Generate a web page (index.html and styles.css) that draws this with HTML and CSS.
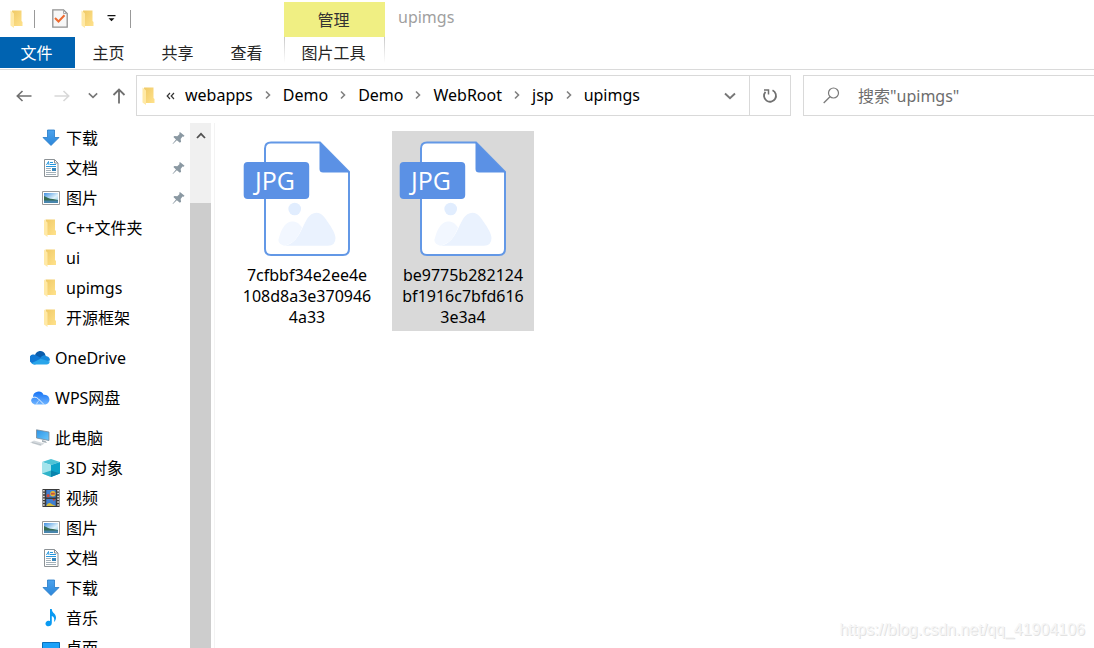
FILE: index.html
```html
<!DOCTYPE html>
<html lang="zh-CN">
<head>
<meta charset="utf-8">
<title>upimgs</title>
<link rel="stylesheet" href="styles.css">
</head>
<body>
<svg class="defs" aria-hidden="true">
  <defs>
    <linearGradient id="gFolder" x1="0" y1="0" x2="1" y2="1"><stop offset="0" stop-color="#efc966"/><stop offset="1" stop-color="#ffe28c"/></linearGradient>
    <linearGradient id="gArrow" x1="0" y1="0" x2="0" y2="1"><stop offset="0" stop-color="#4ba3ee"/><stop offset="1" stop-color="#2b86d9"/></linearGradient>
    <linearGradient id="gSky" x1="0" y1="0" x2="1" y2="1"><stop offset="0" stop-color="#3f8fe0"/><stop offset=".6" stop-color="#e2f3fb"/><stop offset="1" stop-color="#7fc3e8"/></linearGradient>
    <linearGradient id="gScreen" x1="0" y1="0" x2="1" y2="1"><stop offset="0" stop-color="#2c93e6"/><stop offset="1" stop-color="#6cc8fb"/></linearGradient>
    <linearGradient id="gWps" x1="0" y1="0" x2="0" y2="1"><stop offset="0" stop-color="#1673f5"/><stop offset="1" stop-color="#6fb4ff"/></linearGradient>
    <symbol id="folder" viewBox="0 0 13 18">
      <path d="M2 .5H11.500V11L12.500 12V16H3z" fill="url(#gFolder)"/>
      <path d="M.5 .5L4 3.500V18L.5 15.500z" fill="#ffe9a6"/>
    </symbol>
    <symbol id="download" viewBox="0 0 18 18">
      <path d="M5.500 1H12.500V8.500H17L9 16.500L1 8.500H5.500z" fill="url(#gArrow)" stroke="#2579c7" stroke-width=".8"/>
    </symbol>
    <symbol id="doc" viewBox="0 0 18 18">
      <path d="M2.500 .5H12.500L16 4V17.500H2.500z" fill="#fff" stroke="#8c9296"/>
      <path d="M12.500 .5V4H16" fill="none" stroke="#8c9296"/>
      <path d="M4.500 6L6.500 2.500L7 6M8 3.500H11M8 5.500H14M4 7.500H14" fill="none" stroke="#2596dc"/>
      <path d="M4 9.500H9M4 11.500H9M4 13.500H14M4 15.500H14" stroke="#a3b0b8"/>
      <path d="M10 9H14V12H10z" fill="#3b86b8"/>
    </symbol>
    <symbol id="picture" viewBox="0 0 18 18">
      <path d="M.5 2.500H17.500V15.500H.5z" fill="#fff" stroke="#9a9a9a"/>
      <path d="M2 4H16V14H2z" fill="url(#gSky)"/>
      <path d="M2 7C5 8 7 10 11 10L16 11V12H2z" fill="#366b52"/>
      <path d="M2 11.500H16V14H2z" fill="#4886ad"/>
    </symbol>
    <symbol id="pin" viewBox="0 0 14 14">
      <path d="M8.500 .5L13.500 4.500L12.500 5.700L11.300 5.500L9.300 8.200L9.800 11L8.500 12L5.200 9.300L1 13.500L.6 13.100L4.300 8.500L1.500 6L2.600 4.800L5.700 5L8.200 2.700L7.800 1.500z" fill="#8a98a2"/>
    </symbol>
    <symbol id="onedrive" viewBox="0 0 20 14">
      <path d="M5 6A5.300 5.300 0 0 1 15.500 4.500L9 9z" fill="#0a5cab"/>
      <path d="M1 11.500A4.300 4.300 0 0 1 6 4.200L14.500 9L5 13.500Q2 13.500 1 11.500z" fill="#1078d4"/>
      <path d="M10 7.500C12 4 15 3.600 16.500 5.200C19 5.500 20 7.500 20 9.500L14 11z" fill="#1689dc"/>
      <path d="M1.500 12.300L10.500 7.800L19.800 10.500A3.500 3.500 0 0 1 16.500 13.500H4Q2.400 13.400 1.500 12.300z" fill="#29a5ea"/>
    </symbol>
    <symbol id="wps" viewBox="0 0 20 14">
      <path d="M4.500 13.500A4 4 0 0 1 3 6.200A5.500 5.500 0 0 1 13.500 3.800A4.900 4.900 0 0 1 15.500 13.500z" fill="url(#gWps)"/>
      <path d="M1 7.500Q5 4.500 8.500 8L14 13.500" fill="none" stroke="#e6f3ff"/>
      <path d="M6.500 13.500Q7 10.500 9.500 9.300" fill="none" stroke="#cfe6ff" stroke-width=".8"/>
    </symbol>
    <symbol id="pc" viewBox="0 0 20 18">
      <path d="M6.500 .8L19 3V11.500L6.500 9z" fill="url(#gScreen)" stroke="#7b8995" stroke-width=".8"/>
      <path d="M12 11L15.500 12L17 14L12 13z" fill="#a5afb6"/>
      <path d="M0 13.500L4 11.500L14.500 14.500L10.500 17z" fill="#d5dade"/>
      <path d="M2 13.500L11 15.800" stroke="#aab3b9" stroke-width=".7"/>
    </symbol>
    <symbol id="cube" viewBox="0 0 18 18">
      <path d="M9 0L18 3L9 6L0 3z" fill="#4ec3d6"/>
      <path d="M0 3L9 6V18L0 14.500z" fill="#a3e4ec"/>
      <path d="M18 3L9 6V18L18 14.500z" fill="#0da2c9"/>
      <path d="M0 14.500L9 11.500V18z" fill="#2fb3c9"/>
      <path d="M18 14.500L9 11.500V18z" fill="#0a84ad"/>
    </symbol>
    <symbol id="video" viewBox="0 0 18 19">
      <path d="M0 0H18V19H0z" fill="#3a3a3a"/>
      <path d="M1.500 1V19M16.500 1V19" stroke="#f2f2f2" stroke-width="1.600" stroke-dasharray="1.600 1.400"/>
      <path d="M4 1H14V9H4zM4 10.500H14V18H4z" fill="#3f7ed0"/>
      <circle cx="11" cy="5" r="2.800" fill="#e6bc32"/><path d="M9 4H13V6H9z" fill="#cc5140"/>
      <circle cx="6" cy="7" r="1.700" fill="#cf4b38"/><path d="M10.500 10.500H13.500L12 13z" fill="#cf3b2b"/><path d="M4 18Q6 13 10 16L14 18z" fill="#d9bd37"/>
    </symbol>
    <symbol id="music" viewBox="0 0 18 18">
      <path d="M8 0H9.800C9.800 4 14 4.500 14 8.500C14 10.500 13 12 12 13C12.800 9.500 12 8 9.800 7V14C9.800 16.500 7.500 17.700 5.500 17.200C2.500 16.400 3 12.300 6.200 11.800Q7.200 11.600 8 12z" fill="#0a9af2"/>
    </symbol>
    <symbol id="desktop" viewBox="0 0 18 18">
      <path d="M.5 3.500H17.500V16H.5z" fill="#1ba1f8" stroke="#0870bd"/>
    </symbol>
    <symbol id="crumb" viewBox="0 0 6 10"><path d="M1 1.500L4.500 5L1 8.500" fill="none" stroke="#808080" stroke-width="1.600"/></symbol>
    <symbol id="down" viewBox="0 0 12 8"><path d="M1 1.500L6 6.300L11 1.500" fill="none" stroke="#777" stroke-width="1.900"/></symbol>
    <symbol id="jpg" viewBox="0 0 142 134">
      <path d="M35 11.500H84L113 41V118Q113 124 107 124H35Q29 124 29 118V17.500Q29 11.500 35 11.500z" fill="#fff" stroke="#6398e6" stroke-width="2"/>
      <path d="M83.500 11L113.500 41.500H87Q83.500 41.500 83.500 38z" fill="#5b91e5"/>
      <circle cx="58.700" cy="78" r="6.300" fill="#e1edfe"/>
      <path d="M48 114.700C62 113 65 98 71 88C76 80 84 80 89 87C94 94 99.500 102 99.500 107Q99.500 114.700 92 114.700z" fill="#eaf2fe"/>
      <path d="M48 114.700Q40 113 43.500 105C46 97 50 90.500 56 90.500C60 90.500 63 92 66 96.500C62 107 57 113 48 114.700z" fill="#f2f7ff"/>
      <rect x="7.700" y="31" width="65.500" height="37" rx="4" fill="#5b91e5"/>
      <text x="39" y="59" class="jpg-text">JPG</text>
    </symbol>
  </defs>
</svg>

<header class="ribbon">
  <div class="ribbon-left">
    <div class="quick">
      <svg class="q-folder"><use href="#folder"/></svg>
      <i class="q-sep"></i>
      <button class="q-button q-doc" aria-label="属性"><svg width="16" height="19" viewBox="0 0 16 19"><path d="M.8 .8H11.500L15.200 4.500V18.200H.8z" fill="#f7f7f7" stroke="#919191" stroke-width="1.300"/><path d="M11.500 .8V4.500H15.200" fill="none" stroke="#a9a9a9"/><path d="M3 9L6.500 12.500L12.500 6.300" fill="none" stroke="#ed6a30" stroke-width="2"/></svg></button>
      <button class="q-button" aria-label="新建文件夹"><svg class="q-folder"><use href="#folder"/></svg></button>
      <button class="q-button q-more" aria-label="自定义快速访问工具栏"><svg width="9" height="7" viewBox="0 0 9 7"><path d="M.5 0H8.500V1.300H.5zM1.500 3.300H7.500L4.500 6.300z" fill="#111"/></svg></button>
      <i class="q-sep"></i>
    </div>
    <nav class="tabs">
      <button class="tab tab-file">文件</button>
      <button class="tab">主页</button>
      <button class="tab">共享</button>
      <button class="tab">查看</button>
    </nav>
  </div>
  <div class="context">
    <div class="context-title">管理</div>
    <button class="tab context-tab">图片工具</button>
  </div>
  <div class="window-title">upimgs</div>
</header>

<div class="navbar">
  <div class="nav-buttons">
    <button class="nav-button" aria-label="后退"><svg width="16" height="12" viewBox="0 0 16 12"><path d="M6.500 1L1.300 6L6.500 11M1.300 6H15.500" fill="none" stroke="#707070" stroke-width="1.600"/></svg></button>
    <button class="nav-button nav-forward" aria-label="前进" disabled><svg width="16" height="12" viewBox="0 0 16 12"><path d="M9.500 1L14.700 6L9.500 11M14.700 6H.5" fill="none" stroke="#d8d8d8" stroke-width="1.600"/></svg></button>
    <button class="nav-button nav-recent" aria-label="最近浏览的位置"><svg width="10" height="7"><use href="#down"/></svg></button>
    <button class="nav-button nav-up" aria-label="上移"><svg width="14" height="16" viewBox="0 0 14 16"><path d="M1.500 7L7 1.500L12.500 7M7 1.500V15.500" fill="none" stroke="#707070" stroke-width="1.800"/></svg></button>
  </div>
  <div class="address">
    <svg class="a-folder"><use href="#folder"/></svg>
    <svg class="overflow" viewBox="0 0 9 8"><path d="M4 1L1.200 4L4 7M8 1L5.200 4L8 7" fill="none" stroke="#333" stroke-width="1.200"/></svg>
    <nav class="crumbs">
      <a href="#">webapps</a><svg class="crumb"><use href="#crumb"/></svg>
      <a href="#">Demo</a><svg class="crumb"><use href="#crumb"/></svg>
      <a href="#">Demo</a><svg class="crumb"><use href="#crumb"/></svg>
      <a href="#">WebRoot</a><svg class="crumb"><use href="#crumb"/></svg>
      <a href="#">jsp</a><svg class="crumb"><use href="#crumb"/></svg>
      <a href="#">upimgs</a>
    </nav>
    <button class="history" aria-label="以前的位置"><svg width="12" height="8"><use href="#down"/></svg></button>
    <button class="refresh" aria-label="刷新"><svg width="16" height="16" viewBox="0 0 16 16"><path d="M10.500 2.300A6 6 0 1 1 3.500 3.800" fill="none" stroke="#707070" stroke-width="1.800"/><path d="M2 2H6.500V6.500" fill="none" stroke="#707070" stroke-width="1.500"/></svg></button>
  </div>
  <label class="search">
    <svg width="17" height="17" viewBox="0 0 17 17"><circle cx="10.500" cy="6" r="5" fill="none" stroke="#7a7a7a" stroke-width="1.200"/><path d="M7 9.700L.7 16" stroke="#7a7a7a" stroke-width="1.300"/></svg>
    <input type="text" aria-label="搜索" placeholder='搜索"upimgs"'>
  </label>
</div>

<main class="body">
  <aside class="sidebar">
    <ul class="tree">
      <li><a class="item" href="#"><svg class="icon"><use href="#download"/></svg>下载<svg class="pin"><use href="#pin"/></svg></a></li>
      <li><a class="item" href="#"><svg class="icon"><use href="#doc"/></svg>文档<svg class="pin"><use href="#pin"/></svg></a></li>
      <li><a class="item" href="#"><svg class="icon"><use href="#picture"/></svg>图片<svg class="pin"><use href="#pin"/></svg></a></li>
      <li><a class="item" href="#"><svg class="icon icon-folder"><use href="#folder"/></svg>C++文件夹</a></li>
      <li><a class="item" href="#"><svg class="icon icon-folder"><use href="#folder"/></svg>ui</a></li>
      <li><a class="item" href="#"><svg class="icon icon-folder"><use href="#folder"/></svg>upimgs</a></li>
      <li><a class="item" href="#"><svg class="icon icon-folder"><use href="#folder"/></svg>开源框架</a></li>
    </ul>
    <ul class="tree"><li><a class="item root" href="#"><svg class="icon"><use href="#onedrive"/></svg>OneDrive</a></li></ul>
    <ul class="tree"><li><a class="item root" href="#"><svg class="icon"><use href="#wps"/></svg>WPS网盘</a></li></ul>
    <ul class="tree">
      <li><a class="item root" href="#"><svg class="icon"><use href="#pc"/></svg>此电脑</a></li>
      <li><a class="item" href="#"><svg class="icon"><use href="#cube"/></svg>3D 对象</a></li>
      <li><a class="item" href="#"><svg class="icon"><use href="#video"/></svg>视频</a></li>
      <li><a class="item" href="#"><svg class="icon"><use href="#picture"/></svg>图片</a></li>
      <li><a class="item" href="#"><svg class="icon"><use href="#doc"/></svg>文档</a></li>
      <li><a class="item" href="#"><svg class="icon"><use href="#download"/></svg>下载</a></li>
      <li><a class="item" href="#"><svg class="icon"><use href="#music"/></svg>音乐</a></li>
      <li><a class="item" href="#"><svg class="icon"><use href="#desktop"/></svg>桌面</a></li>
    </ul>
  </aside>
  <div class="scrollbar">
    <button class="scroll-up" aria-label="向上滚动"><svg width="10" height="7" viewBox="0 0 10 7"><path d="M1 6L5 1.800L9 6" fill="none" stroke="#505050" stroke-width="1.800"/></svg></button>
    <div class="thumb"></div>
  </div>
  <section class="files">
    <figure class="file">
      <svg class="thumbnail"><use href="#jpg"/></svg>
      <figcaption>7cfbbf34e2ee4e<br>108d8a3e370946<br>4a33</figcaption>
    </figure>
    <figure class="file selected">
      <svg class="thumbnail"><use href="#jpg"/></svg>
      <figcaption>be9775b282124<br>bf1916c7bfd616<br>3e3a4</figcaption>
    </figure>
  </section>
</main>
<div class="watermark">https://blog.csdn.net/qq_41904106</div>
</body>
</html>
```

FILE: styles.css
```css
* { box-sizing: border-box; }

body {
  margin: 0;
  height: 100vh;
  display: flex;
  flex-direction: column;
  overflow: hidden;
  background: #fff;
  color: #000;
  font: 16px/24px "Noto Sans", "Noto Sans CJK SC", sans-serif;
}

button {
  border: 0;
  padding: 0;
  background: none;
  color: inherit;
  font: inherit;
}

a { color: inherit; text-decoration: none; }
svg { display: block; flex: none; }
.defs { position: absolute; width: 0; height: 0; }

/* Ribbon */
.ribbon {
  display: flex;
  flex: none;
  border-bottom: 1px solid #dadada;
}

.ribbon-left { width: 284px; }

.quick {
  display: flex;
  align-items: center;
  height: 37px;
  padding-left: 10px;
}

.q-folder { width: 13px; height: 18px; }
.q-sep { width: 1px; height: 18px; margin: 0 17px 0 11px; background: #999; }
.q-button { margin-right: 13px; }
.q-more { margin-right: 3px; }

.tabs { display: flex; }

.tab {
  width: 69px;
  height: 32px;
  padding-right: 2px;
  color: #262626;
}

.tab-file {
  width: 75px;
  height: 31px;
  background: #0063b1;
  color: #fff;
}

.context { width: 101px; padding-top: 2px; }

.context-title {
  height: 35px;
  padding: 6px 2px 0 0;
  background: #f0ef83;
  color: #333;
  text-align: center;
}

.context-tab {
  width: 100%;
  background:
    linear-gradient(#c8c8c8, #fff 26px) left / 1px 100% no-repeat,
    linear-gradient(#c8c8c8, #fff 26px) right / 1px 100% no-repeat;
}

.window-title { padding: 5px 13px; color: #a0a0a0; }

/* Navigation bar */
.navbar {
  display: flex;
  flex: none;
  padding: 5px 0 7px;
}

.nav-buttons {
  display: flex;
  align-items: center;
  width: 136px;
  padding-left: 16px;
}

.nav-forward { margin-left: 22px; }
.nav-recent { margin-left: 18px; }
.nav-up { margin-left: 14px; }

.address {
  display: flex;
  align-items: center;
  flex: 1;
  height: 41px;
  padding-left: 5px;
  border: 1px solid #d9d9d9;
}

.a-folder { width: 13px; height: 18px; }
.overflow { width: 9px; height: 8px; margin: 0 10px 0 11px; }
.crumbs { display: flex; align-items: center; flex: 1; gap: 12px; padding-bottom: 2px; }
.crumb { width: 6px; height: 10px; }
.history { width: 38px; padding-left: 13px; }

.refresh {
  display: grid;
  place-items: center;
  width: 41px;
  height: 100%;
  border-left: 1px solid #d9d9d9;
}

.search {
  display: flex;
  align-items: center;
  gap: 18px;
  width: 291px;
  margin-left: 12px;
  padding-left: 19px;
  border: 1px solid #d9d9d9;
  border-right: 0;
}

.search input {
  flex: 1;
  min-width: 0;
  padding: 0;
  border: 0;
  outline: 0;
  background: none;
  font: inherit;
}

.search input::placeholder { color: #6d6d6d; opacity: 1; }

/* Body */
.body { display: flex; flex: 1; min-height: 0; }

.sidebar { width: 190px; overflow: hidden; }

.tree {
  margin: 0 0 10px;
  padding: 0;
  list-style: none;
}

.item {
  display: flex;
  align-items: center;
  gap: 6px;
  height: 30px;
  padding: 0 5px 0 42px;
}

.root { gap: 5px; padding-left: 30px; }
.icon { width: 18px; height: 18px; }
.icon-folder { width: 16px; margin-right: 2px; }
.root .icon { width: 20px; }
.pin { width: 13px; height: 14px; margin-left: auto; }

.scrollbar {
  width: 21px;
  overflow: hidden;
  background: #f0f0f0;
}

.scroll-up {
  display: grid;
  place-items: center;
  width: 100%;
  height: 24px;
}

.thumb { height: 100%; margin-top: 56px; background: #cdcdcd; }

.files {
  display: flex;
  align-items: flex-start;
  flex: 1;
  gap: 14px;
  margin-left: 3px;
  padding: 8px 21px;
  border-left: 1px solid #f3f3f3;
}

.file {
  width: 142px;
  margin: 0;
  padding-bottom: 3px;
  text-align: center;
}

.selected { background: #d9d9d9; }
.thumbnail { width: 142px; height: 134px; }
.file figcaption { line-height: 21px; }

.jpg-text {
  fill: #fff;
  font-family: "Open Sans", "Noto Sans", sans-serif;
  font-size: 25px;
  text-anchor: middle;
}

.watermark {
  position: absolute;
  right: 9px;
  bottom: 6px;
  color: #f6f6f6;
  font-family: "Liberation Sans", Arial, sans-serif;
  text-shadow: 1px 1px 0 #e2e2e2;
}
```
